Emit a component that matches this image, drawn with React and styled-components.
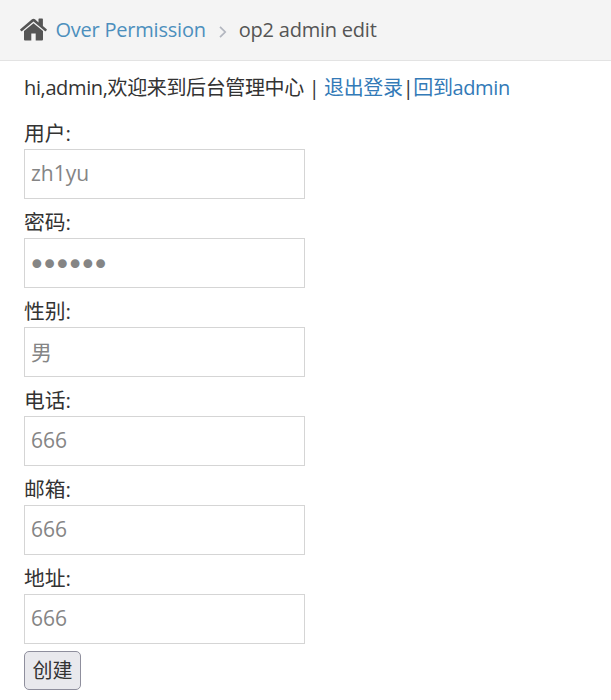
import React from "react";
import styled, { createGlobalStyle } from "styled-components";

const GlobalStyle = createGlobalStyle`
  * { box-sizing: border-box; }
  body { margin: 0; background: #fff; color: #333; font: 20px/30px "Open Sans", "Noto Sans CJK SC", sans-serif; }
`;
const Crumbs = styled.nav`
  display: flex; align-items: center; height: 61px; letter-spacing: -0.22px;
  padding: 0 20px; background: #f4f4f4; border-bottom: 1px solid #e3e3e3; color: #555;
`;
const HomeIcon = styled.svg`
  width: 27px; height: 23px; margin: 0 8.5px 1px 0; flex: none;
`;
const CrumbLink = styled.a`color: #4c8fbd; white-space: nowrap;`;
const Chevron = styled.svg`width: 8px; height: 12px; margin: 4px 11.5px 0 13.5px; flex: none;`;
const Content = styled.main`padding: 12px 24px 0;`;
const Greeting = styled.p`margin: 0 0 15px; height: 30px; white-space: nowrap; letter-spacing: -0.37px;`;
const Link = styled.a`color: #337ab7;`;
const Field = styled.label`display: block; height: 89px;`;
const Caption = styled.span`display: block; height: 31px; font-size: 20.8px; line-height: 30px;`;
const Input = styled.input`
  display: block; width: 281px; height: 50px; padding: 0 6px 2px;
  border: 1px solid #d5d5d5; border-radius: 0; background: #fff; color: #858585;
  font: 21px/30px "Open Sans", "Noto Sans CJK SC", sans-serif; outline: 0;

  &[type="password"] {
    padding: 2px 4px 0 3px;
    font: 30px/46px "DejaVu Sans", sans-serif;
    letter-spacing: -4.95px;
  }
`;
const Submit = styled.button`
  display: block; width: 57px; height: 39px; margin-top: -1px; padding: 0; border: 1px solid #8f8f9d;
  border-radius: 5px; background: #e9e9ed; color: #333;
  font: 20px/30px "Open Sans", "Noto Sans CJK SC", sans-serif;
`;
const fields = [
  ["用户:", "zh1yu", "text"],
  ["密码:", "666666", "password"],
  ["性别:", "男", "text"],
  ["电话:", "666", "text"],
  ["邮箱:", "666", "text"],
  ["地址:", "666", "text"],
];

export default function App() {
  return (
    <>
      <GlobalStyle />
      <Crumbs>
        <HomeIcon viewBox="0 0 27 23" fill="#555">
          <path d="M13.5 5.2 4 13v8.5q0 1 1 1h6.3v-7h4.4v7H22q1 0 1-1V13z" />
          <path d="M26.7 11.2 22.9 8V1.2q0-.7-.7-.7h-3q-.7 0-.7.7v3.2L15 1.3q-1.5-1.2-3 0L.3 11.2q-.4.4-.1.8l.9 1.1q.4.4.8.1L13.5 3.6l11.6 9.6q.5.3.8-.1l.9-1.1q.3-.5-.1-.8z" />
        </HomeIcon>
        <CrumbLink>Over Permission</CrumbLink>
        <Chevron viewBox="0 0 8 12" fill="none" stroke="#b2b6bf" strokeWidth="1.7"><path d="m1 .8 5.2 5.2L1 11.2" /></Chevron>
        <span>op2 admin edit</span>
      </Crumbs>
      <Content>
        <Greeting>hi,admin,欢迎来到后台管理中心 | <Link>退出登录</Link>|<Link>回到admin</Link></Greeting>
        {fields.map(([caption, value, type]) => (
          <Field key={caption}>
            <Caption>{caption}</Caption>
            <Input type={type} defaultValue={value} />
          </Field>
        ))}
        <Submit>创建</Submit>
      </Content>
    </>
  );
}
